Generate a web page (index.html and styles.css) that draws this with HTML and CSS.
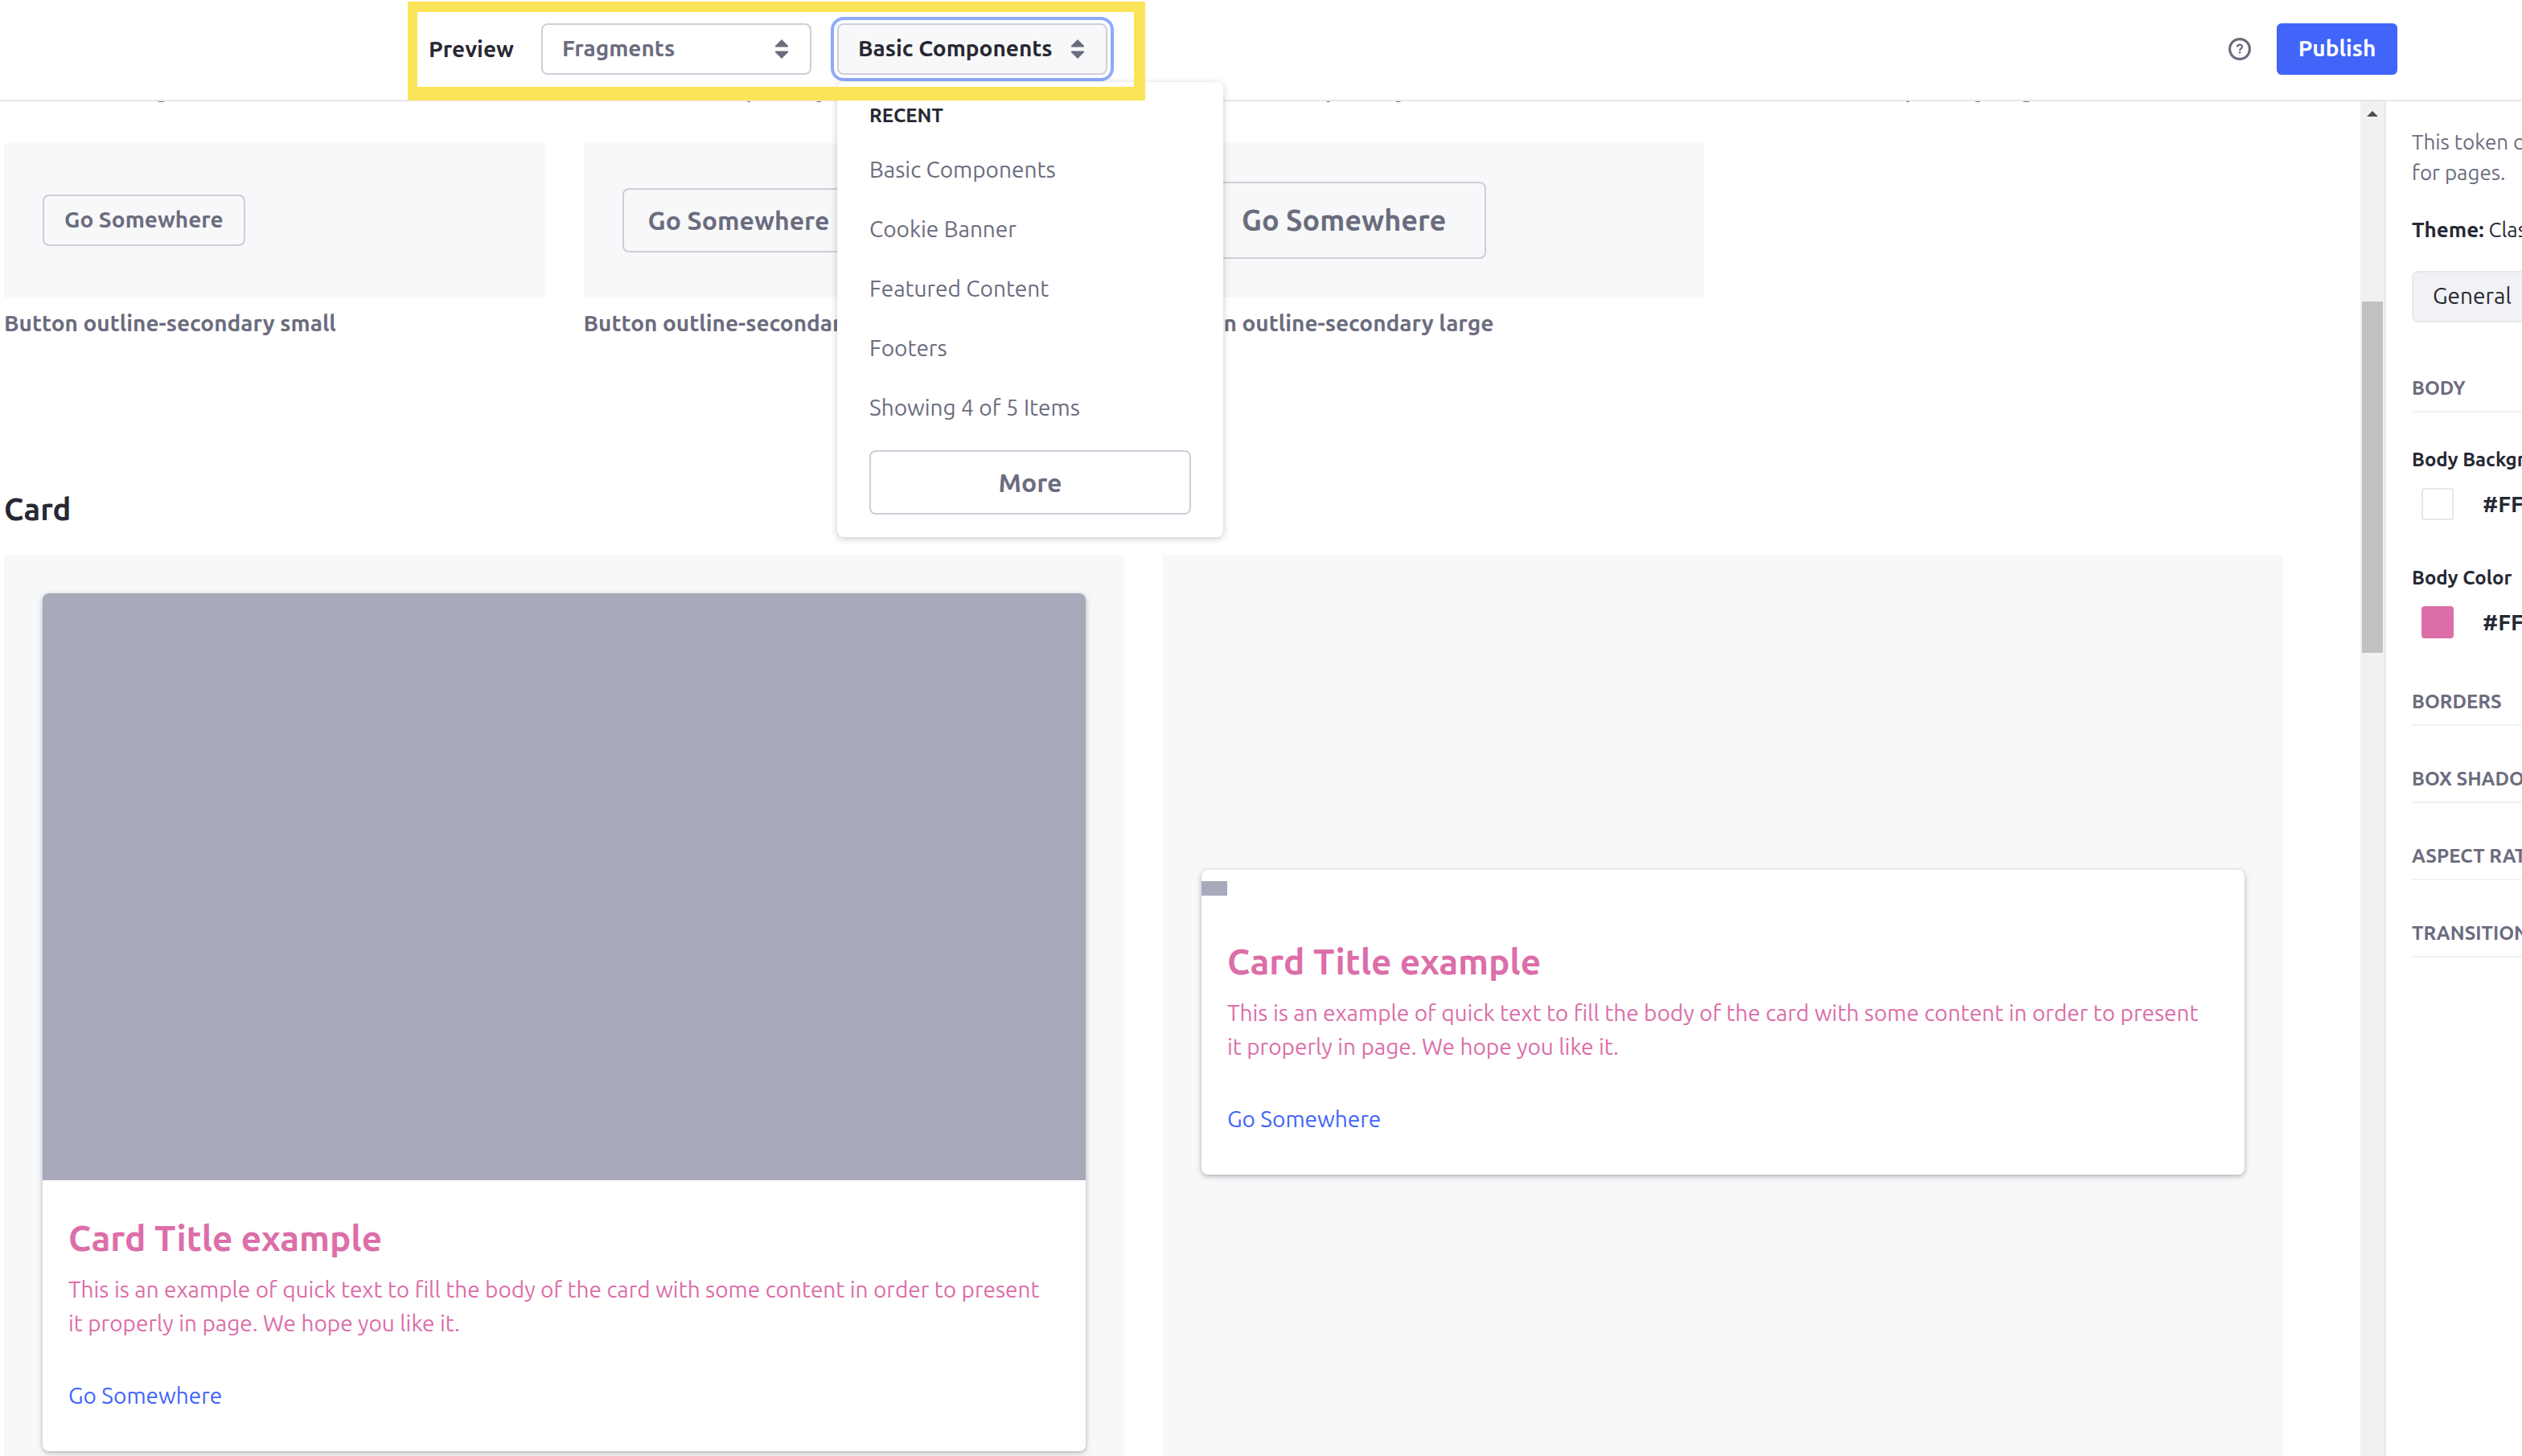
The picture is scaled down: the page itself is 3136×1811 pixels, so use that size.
FILE: index.html
```html
<!DOCTYPE html>
<html lang="en">
<head>
<meta charset="utf-8">
<title>Style Book Editor</title>
<link rel="stylesheet" href="styles.css">
</head>
<body>
<div class="app">
  <header class="toolbar">
    <div class="preview-controls">
      <label class="preview-label" for="preview-type">Preview</label>
      <div class="picker">
        <select class="picker-control" id="preview-type">
          <option>Fragments</option>
        </select>
        <svg class="caret" viewBox="0 0 16 24" aria-hidden="true"><path d="M8 0l8 8v1.500H0V8zM0 14.500h16V16l-8 8-8-8z"/></svg>
      </div>
      <div class="picker">
        <button class="picker-control picker-open" type="button" aria-haspopup="true" aria-expanded="true">Basic Components</button>
        <svg class="caret" viewBox="0 0 16 24" aria-hidden="true"><path d="M8 0l8 8v1.500H0V8zM0 14.500h16V16l-8 8-8-8z"/></svg>
        <div class="menu">
          <h2 class="menu-title">Recent</h2>
          <a class="menu-item" href="#basic">Basic Components</a>
          <a class="menu-item" href="#cookie">Cookie Banner</a>
          <a class="menu-item" href="#featured">Featured Content</a>
          <a class="menu-item" href="#footers">Footers</a>
          <p class="menu-item">Showing 4 of 5 Items</p>
          <button class="btn menu-more" type="button">More</button>
        </div>
      </div>
      <div class="highlight"></div>
    </div>
    <div class="toolbar-actions">
      <button class="help" type="button" aria-label="Help">
        <svg viewBox="0 0 28 28" fill="none" stroke="currentColor" aria-hidden="true"><circle cx="14" cy="14" r="12.4" stroke-width="3.2"/><path d="M10.900 11.600c0-1.900 1.300-3 3.100-3s3.100 1.100 3.100 2.700c0 2.200-3 2.200-3 4.600" stroke-width="2.200"/><circle cx="14.100" cy="18.200" r="1.300" fill="currentColor" stroke="none"/></svg>
      </button>
      <button class="publish" type="button">Publish</button>
    </div>
  </header>

  <div class="workspace">
    <main class="preview">
      <div class="preview-content">
        <div class="button-grid previous-row">
          <p class="caption">Button link large</p>
          <p class="caption">Button outline-primary small</p>
          <p class="caption">Button outline-primary</p>
          <p class="caption">Button outline-primary large</p>
        </div>
        <div class="button-grid">
          <figure class="sample">
            <div class="sample-box"><button class="btn btn-small" type="button">Go Somewhere</button></div>
            <figcaption class="caption">Button outline-secondary small</figcaption>
          </figure>
          <figure class="sample">
            <div class="sample-box"><button class="btn" type="button">Go Somewhere</button></div>
            <figcaption class="caption">Button outline-secondary</figcaption>
          </figure>
          <figure class="sample">
            <div class="sample-box"><button class="btn btn-large" type="button">Go Somewhere</button></div>
            <figcaption class="caption">Button outline-secondary large</figcaption>
          </figure>
        </div>
        <h2 class="section-title">Card</h2>
        <div class="card-grid">
          <div class="card-box">
            <article class="card">
              <div class="card-image"></div>
              <div class="card-body">
                <h3 class="card-title">Card Title example</h3>
                <p class="card-text">This is an example of quick text to fill the body of the card with some content in order to present it properly in page. We hope you like it.</p>
                <a class="card-link" href="#card-1">Go Somewhere</a>
              </div>
            </article>
          </div>
          <div class="card-box">
            <article class="card">
              <div class="card-thumb-line"><div class="card-thumb"></div></div>
              <div class="card-body">
                <h3 class="card-title">Card Title example</h3>
                <p class="card-text">This is an example of quick text to fill the body of the card with some content in order to present it properly in page. We hope you like it.</p>
                <a class="card-link" href="#card-2">Go Somewhere</a>
              </div>
            </article>
          </div>
        </div>
      </div>
    </main>
    <div class="scrollbar" aria-hidden="true">
      <svg class="scroll-arrow" viewBox="0 0 14 7"><path d="M7 0l7 7H0z"/></svg>
      <div class="scroll-thumb"></div>
    </div>
    <aside class="sidebar">
      <div class="sidebar-content">
        <p class="sidebar-note">This token definition belongs to the theme set<br>for pages.</p>
        <p class="sidebar-theme"><strong>Theme:</strong> Classic</p>
        <button class="category" type="button">General</button>
        <h3 class="group-title">Body</h3>
        <div class="fields">
          <label class="field-label" for="body-bg">Body Background</label>
          <div class="color-row"><span class="swatch swatch-white"></span><input class="color-value" id="body-bg" value="#FFFFFF"></div>
          <label class="field-label" for="body-color">Body Color</label>
          <div class="color-row"><span class="swatch swatch-pink"></span><input class="color-value" id="body-color" value="#FF69B4"></div>
        </div>
        <h3 class="group-title">Borders</h3>
        <h3 class="group-title">Box Shadow</h3>
        <h3 class="group-title">Aspect Ratio</h3>
        <h3 class="group-title">Transitions</h3>
      </div>
    </aside>
  </div>
</div>
</body>
</html>
```
FILE: styles.css
```css
:root {
  --dark: #272833;
  --gray: #6b6c7e;
  --border: #e7e7ed;
  --control-border: #cdced9;
  --surface: #f7f8f9;
  --placeholder: #a8a9ba;
  --blue: #4165f9;
  --pink: #dc6ea9;
}

* { box-sizing: border-box; }

body, h2, h3, p, figure { margin: 0; }

body {
  font: 400 28px/42px Ubuntu, "Noto Sans", sans-serif;
  color: var(--dark);
  background: #fff;
}

button, input, select { font: inherit; color: inherit; }
button { cursor: pointer; }
a { text-decoration: none; }

.app {
  display: flex;
  flex-direction: column;
  height: 100vh;
  overflow: hidden;
}

/* Toolbar */
.toolbar {
  position: relative;
  z-index: 2;
  flex: none;
  display: flex;
  align-items: center;
  justify-content: space-between;
  padding: 29px 155px 31px 533px;
  background: #fff;
  border-bottom: 2px solid var(--border);
}

.preview-controls {
  position: relative;
  display: flex;
  align-items: center;
  gap: 32px;
}

.preview-label { width: 108px; font-weight: 700; }

.picker { position: relative; width: 336px; }

.picker-control {
  appearance: none;
  display: block;
  width: 100%;
  height: 64px;
  padding: 0 24px 2px;
  border: 2px solid var(--control-border);
  border-radius: 8px;
  background: #fff;
  color: var(--gray);
  font-weight: 700;
  text-align: left;
}

.picker-open {
  background: var(--surface);
  color: var(--dark);
  box-shadow: 0 0 0 4px #fff, 0 0 0 8px #8fa9fb;
}

.caret {
  position: absolute;
  top: 20px;
  right: 29px;
  width: 16px;
  height: 24px;
  fill: var(--gray);
  pointer-events: none;
}

.menu {
  position: absolute;
  top: 73px;
  left: 0;
  width: 480px;
  padding: 20px 40px 28px;
  border-radius: 8px;
  background: #fff;
  box-shadow: 0 2px 8px rgba(39, 40, 51, 0.25);
}

.menu-title {
  margin-bottom: 8px;
  font-size: 24px;
  line-height: 44px;
  text-transform: uppercase;
}

.menu-item {
  display: block;
  padding: 16px 0;
  color: var(--gray);
}

.btn {
  height: 80px;
  padding: 0 30px;
  border: 2px solid var(--control-border);
  border-radius: 8px;
  background: transparent;
  color: var(--gray);
  font-size: 32px;
  font-weight: 700;
}

.btn-small { height: 64px; padding: 0 25px 2px; font-size: 28px; }
.btn-large { height: 96px; padding: 0 48px; font-size: 36px; }
.menu-more { display: block; width: 100%; margin-top: 16px; }

.highlight {
  position: absolute;
  top: -27px;
  right: -47px;
  bottom: -32px;
  left: -26px;
  border: solid #fce459;
  border-width: 13px 14px 17px 12px;
  pointer-events: none;
}

.toolbar-actions {
  display: flex;
  align-items: center;
  gap: 32px;
}

.help {
  width: 28px;
  height: 28px;
  padding: 0;
  border: 0;
  background: none;
  color: var(--gray);
}
.help svg { display: block; }

.publish {
  width: 150px;
  height: 64px;
  padding: 0 0 2px;
  border: 0;
  border-radius: 6px;
  background: var(--blue);
  color: #fff;
  font-weight: 700;
}

/* Preview area */
.workspace {
  flex: 1;
  display: flex;
  min-height: 0;
}

.preview {
  flex: 1;
  min-width: 0;
  overflow: hidden;
}

.preview-content {
  margin-top: -35px;
  padding: 0 96px 0 5px;
}

.button-grid {
  display: grid;
  grid-template-columns: repeat(4, 1fr);
  gap: 48px;
}

.previous-row { margin-bottom: 45px; }

.caption {
  color: var(--gray);
  font-weight: 700;
}

.sample-box {
  display: flex;
  align-items: center;
  height: 192px;
  margin-bottom: 11px;
  padding: 0 48px;
  background: var(--surface);
}

.section-title {
  margin: 187px 0 34px;
  font-size: 38px;
  line-height: 46px;
}

.card-grid {
  display: grid;
  grid-template-columns: repeat(2, 1fr);
  gap: 48px;
}

.card-box {
  display: flex;
  align-items: center;
  padding: 48px;
  background: var(--surface);
}

.card {
  flex: 1;
  overflow: hidden;
  border-radius: 8px;
  background: #fff;
  box-shadow: 0 2px 6px rgba(39, 40, 51, 0.35);
}

.card-image {
  aspect-ratio: 16 / 9;
  background: var(--placeholder);
}

.card-thumb-line { height: 42px; padding-top: 14px; }
.card-thumb { width: 32px; height: 18px; background: var(--placeholder); }

.card-body {
  padding: 48px 32px;
  color: var(--pink);
}

.card-title {
  margin-bottom: 19px;
  font-size: 44px;
  line-height: 48px;
}

.card-text {
  margin-bottom: 48px;
  padding-right: 16px;
}

.card-link { display: block; color: var(--blue); }

/* Scrollbar */
.scrollbar {
  flex: none;
  display: flex;
  flex-direction: column;
  align-items: center;
  width: 30px;
  padding-top: 12px;
  background: #f1f1f1;
}

.scroll-arrow { width: 14px; height: 7px; fill: #505050; }
.scroll-thumb { width: 26px; height: 437px; margin-top: 230px; background: #c1c1c1; }

/* Sidebar */
.sidebar {
  flex: none;
  width: 171px;
  overflow: hidden;
  border-left: 2px solid var(--border);
}

.sidebar-content {
  width: 640px;
  padding: 32px;
}

.sidebar-note {
  margin-bottom: 33px;
  color: var(--gray);
  font-size: 26px;
  line-height: 38px;
}

.sidebar-theme {
  margin-bottom: 32px;
  font-size: 26px;
  line-height: 38px;
}

.category {
  display: block;
  width: 100%;
  height: 64px;
  margin-bottom: 64px;
  padding: 0 24px 2px;
  border: 2px solid var(--border);
  border-radius: 8px;
  background: #f1f2f5;
  text-align: left;
}

.group-title {
  height: 48px;
  margin-bottom: 48px;
  border-bottom: 2px solid #f1f2f5;
  color: var(--gray);
  font-size: 24px;
  line-height: 36px;
  text-transform: uppercase;
}

.fields {
  margin-top: -7px;
  padding-bottom: 7px;
}

.field-label {
  display: block;
  margin-bottom: 5px;
  font-size: 24px;
  font-weight: 700;
  line-height: 36px;
}

.color-row {
  display: flex;
  align-items: center;
  gap: 36px;
  height: 64px;
  margin-bottom: 42px;
  padding-left: 12px;
}

.swatch {
  flex: none;
  width: 40px;
  height: 40px;
  border-radius: 4px;
}
.swatch-white { border: 2px solid var(--border); }
.swatch-pink { background: var(--pink); }

.color-value {
  width: 300px;
  padding: 0;
  border: 0;
  background: none;
  font-weight: 700;
}
```
